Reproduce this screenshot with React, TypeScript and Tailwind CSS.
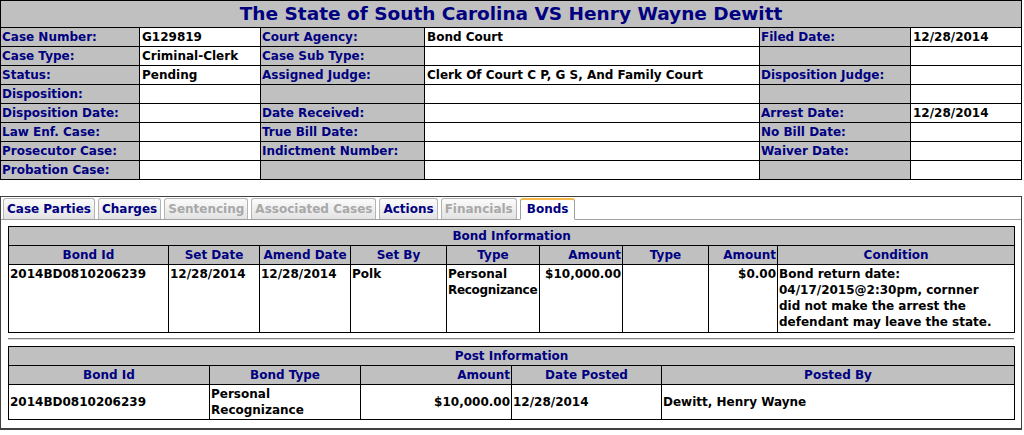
const navy = 'text-[#000080]';

const Label = ({ children }: { children?: React.ReactNode }) => (
  <td className={`bg-[#c0c0c0] border border-black px-[1px] align-middle ${navy}`}>{children}</td>
);

const Value = ({ children }: { children?: React.ReactNode }) => (
  <td className="bg-white border border-black px-[2px] align-middle text-black">{children}</td>
);

const caseRows: [string, string, string, string, string, string][] = [
  ['Case Number:', 'G129819', 'Court Agency:', 'Bond Court', 'Filed Date:', '12/28/2014'],
  ['Case Type:', 'Criminal-Clerk', 'Case Sub Type:', '', '', ''],
  ['Status:', 'Pending', 'Assigned Judge:', 'Clerk Of Court C P, G S, And Family Court', 'Disposition Judge:', ''],
  ['Disposition:', '', '', '', '', ''],
  ['Disposition Date:', '', 'Date Received:', '', 'Arrest Date:', '12/28/2014'],
  ['Law Enf. Case:', '', 'True Bill Date:', '', 'No Bill Date:', ''],
  ['Prosecutor Case:', '', 'Indictment Number:', '', 'Waiver Date:', ''],
  ['Probation Case:', '', '', '', '', ''],
];

const tabs = [
  { name: 'Case Parties', state: 'on' },
  { name: 'Charges', state: 'on' },
  { name: 'Sentencing', state: 'off' },
  { name: 'Associated Cases', state: 'off' },
  { name: 'Actions', state: 'on' },
  { name: 'Financials', state: 'off' },
  { name: 'Bonds', state: 'active' },
];

const Th = ({ children, right, span }: { children?: React.ReactNode; right?: boolean; span?: number }) => (
  <th
    colSpan={span}
    className={`bg-[#c0c0c0] border border-black px-[1px] h-[19px] p-0 font-bold leading-[17px] ${navy} ${
      right ? 'text-right' : 'text-center'
    }`}
  >
    {children}
  </th>
);

const Td = ({ children, right, middle }: { children?: React.ReactNode; right?: boolean; middle?: boolean }) => (
  <td
    className={`bg-white border border-black px-[1px] py-[1px] leading-[16px] text-black ${right ? 'text-right' : 'text-left'} ${
      middle ? 'align-middle' : 'align-top'
    }`}
  >
    {children}
  </td>
);

export default function App() {
  return (
    <div className="w-[1024px] h-[435px] bg-white font-['DejaVu_Sans',sans-serif] font-bold text-[12px] leading-[18px] overflow-hidden">
      <table className="w-[1022px] table-fixed border-collapse">
        <colgroup>
          <col className="w-[139px]" />
          <col className="w-[121px]" />
          <col className="w-[164px]" />
          <col className="w-[335px]" />
          <col className="w-[151px]" />
          <col className="w-[111px]" />
        </colgroup>
        <tbody>
          <tr>
            <td colSpan={6} className={`bg-[#c0c0c0] border border-black h-[27px] text-center text-[18.5px] leading-[24px] ${navy}`}>
              The State of South Carolina VS Henry Wayne Dewitt
            </td>
          </tr>
          {caseRows.map((r, i) => (
            <tr key={i} className="h-[19px]">
              <Label>{r[0]}</Label>
              <Value>{r[1]}</Value>
              <Label>{r[2]}</Label>
              <Value>{r[3]}</Value>
              <Label>{r[4]}</Label>
              <Value>{r[5]}</Value>
            </tr>
          ))}
        </tbody>
      </table>

      <div className="mt-[16px] w-[1022px] h-[234px] border-t border-l border-r border-b-2 border-[#404040]">
        {/* tab strip */}
        <div className="flex items-end gap-[3px] pl-[2px] pt-[1px] border-b border-[#a0a0a0]">
          {tabs.map((t) =>
            t.state === 'active' ? (
              <div
                key={t.name}
                className={`h-[22px] -mb-[1px] px-[6px] bg-white border border-[#a0a0a0] border-b-white border-t-2 border-t-[#f5b849] rounded-t-[3px] leading-[19px] ${navy}`}
              >
                {t.name}
              </div>
            ) : (
              <div
                key={t.name}
                className={`h-[21px] px-[3px] bg-gradient-to-b from-[#fbfbfb] to-[#e3e3e3] border border-b-0 border-[#b4b4b4] rounded-t-[3px] leading-[20px] ${
                  t.state === 'on' ? navy : 'text-[#a8a8a8]'
                }`}
              >
                {t.name}
              </div>
            )
          )}
        </div>

        <div className="px-[7px] pt-[6px]">
          {/* bond information */}
          <table className="w-[1006px] table-fixed border-collapse">
            <colgroup>
              <col className="w-[160px]" />
              <col className="w-[91px]" />
              <col className="w-[91px]" />
              <col className="w-[96px]" />
              <col className="w-[93px]" />
              <col className="w-[83px]" />
              <col className="w-[86px]" />
              <col className="w-[69px]" />
              <col className="w-[237px]" />
            </colgroup>
            <thead>
              <tr>
                <Th span={9}>Bond Information</Th>
              </tr>
              <tr>
                <Th>Bond Id</Th>
                <Th>Set Date</Th>
                <Th>Amend Date</Th>
                <Th>Set By</Th>
                <Th>Type</Th>
                <Th right>Amount</Th>
                <Th>Type</Th>
                <Th right>Amount</Th>
                <Th>Condition</Th>
              </tr>
            </thead>
            <tbody>
              <tr className="h-[68px]">
                <Td>2014BD0810206239</Td>
                <Td>12/28/2014</Td>
                <Td>12/28/2014</Td>
                <Td>Polk</Td>
                <Td>
                  Personal
                  <br />
                  <span className="tracking-[-0.3px]">Recognizance</span>
                </Td>
                <Td right>$10,000.00</Td>
                <Td />
                <Td right>$0.00</Td>
                <Td>
                  Bond return date:
                  <br />
                  04/17/2015@2:30pm, cornner
                  <br />
                  did not make the arrest the
                  <br />
                  defendant may leave the state.
                </Td>
              </tr>
            </tbody>
          </table>

          <div className="mt-[5px] mb-[6px] h-[2px] border-t border-t-[#808080] border-b border-b-[#e0e0e0]" />

          {/* post information */}
          <table className="w-[1006px] table-fixed border-collapse">
            <colgroup>
              <col className="w-[201px]" />
              <col className="w-[151px]" />
              <col className="w-[151px]" />
              <col className="w-[150px]" />
              <col className="w-[353px]" />
            </colgroup>
            <thead>
              <tr>
                <Th span={5}>Post Information</Th>
              </tr>
              <tr>
                <Th>Bond Id</Th>
                <Th>Bond Type</Th>
                <Th right>Amount</Th>
                <Th>Date Posted</Th>
                <Th>Posted By</Th>
              </tr>
            </thead>
            <tbody>
              <tr className="h-[35px]">
                <Td middle>2014BD0810206239</Td>
                <Td middle>
                  Personal
                  <br />
                  Recognizance
                </Td>
                <Td middle right>
                  $10,000.00
                </Td>
                <Td middle>12/28/2014</Td>
                <Td middle>Dewitt, Henry Wayne</Td>
              </tr>
            </tbody>
          </table>
        </div>
      </div>
    </div>
  );
}
